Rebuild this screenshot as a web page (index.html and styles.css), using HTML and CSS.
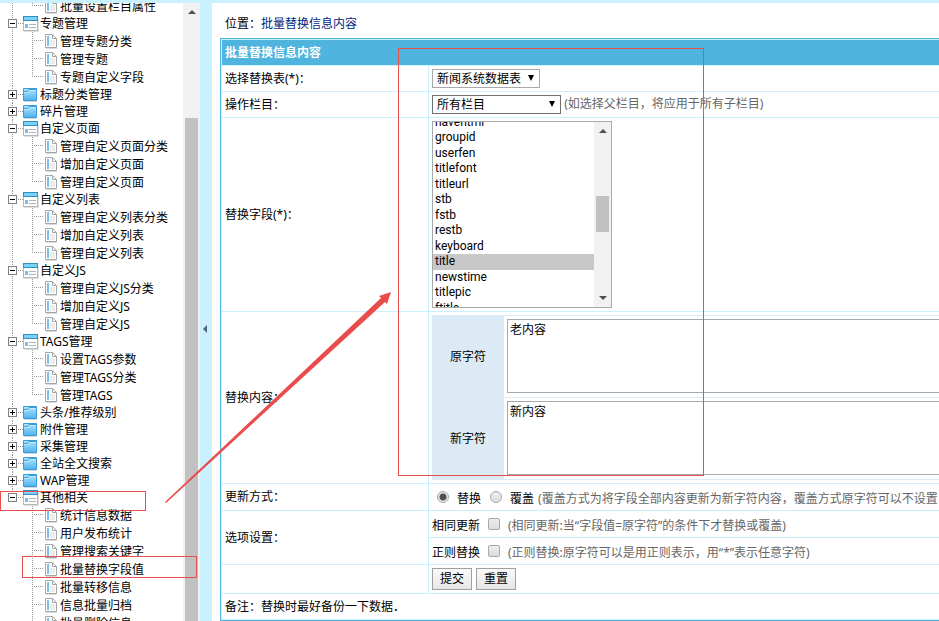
FILE: index.html
```html
<!DOCTYPE html>
<html lang="zh-CN">
<head>
  <meta charset="UTF-8" />
  <title>批量替换信息内容</title>
  <meta name="viewport" content="width=device-width, initial-scale=1.0" />
  <link rel="stylesheet" href="styles.css">
</head>
<body>
  <svg class="sprite" aria-hidden="true">
    <linearGradient id="blue" x1="0" y1="0" x2="0" y2="1">
      <stop offset="0" stop-color="#b4e6fd"/>
      <stop offset="1" stop-color="#4db2ef"/>
    </linearGradient>
    <symbol id="i-open" viewBox="0 0 16 16">
      <path d="M1 15.5h14.5V3" fill="none" stroke="#e0e0e0"/>
      <rect x="0.5" y="0.5" width="14" height="14" fill="#fdfdfd" stroke="#b4b8bb"/>
      <rect x="0" y="0" width="15" height="5" fill="#2f8fc6"/>
      <rect x="1" y="1" width="13" height="3" fill="#7dd0f7"/>
      <rect x="2" y="8" width="3" height="4" fill="#7cc0ea"/>
      <path d="M6 8.5h7M6 11.5h7" stroke="#b5b5b5"/>
    </symbol>
    <symbol id="i-folder" viewBox="0 0 16 16">
      <path d="M1 14.5h13" stroke="#d8d8d8"/>
      <path d="M0.5 13.5V1.5H13.5V13.5Z" fill="url(#blue)" stroke="#3a9bdb"/>
      <path d="M1 4.5H4.5L6 2.5H13" fill="none" stroke="#3a9bdb"/>
      <path d="M1 5.5H5L6.5 3.5H13" fill="none" stroke="#c4ecfe"/>
    </symbol>
    <symbol id="i-page" viewBox="0 0 13 16">
      <path d="M1 14.5h11" fill="none" stroke="#dcdcdc"/>
      <path d="M0.5 0.5H7.5L11.5 4.5V13.5H0.5Z" fill="#fff" stroke="#a3a7aa"/>
      <path d="M7.5 0.5V4.5H11.5" fill="none" stroke="#a3a7aa"/>
      <rect x="2" y="2" width="2" height="10" fill="#7cc0ea"/>
      <path d="M5 6h5v6H5z" fill="#ececec"/>
    </symbol>
  </svg>

  <div class="layout">
    <nav class="sidebar">
      <ul class="tree">
        <li class="node">
          <ul class="children">
            <li><svg class="icon-page"><use href="#i-page"/></svg><a href="#">批量设置栏目属性</a></li>
          </ul>
        </li>
        <li class="node">
          <div class="node-row"><button class="toggle minus" aria-label="收起"></button><svg class="icon"><use href="#i-open"/></svg><a href="#">专题管理</a></div>
          <ul class="children">
            <li><svg class="icon-page"><use href="#i-page"/></svg><a href="#">管理专题分类</a></li>
            <li><svg class="icon-page"><use href="#i-page"/></svg><a href="#">管理专题</a></li>
            <li><svg class="icon-page"><use href="#i-page"/></svg><a href="#">专题自定义字段</a></li>
          </ul>
        </li>
        <li class="node">
          <div class="node-row"><button class="toggle plus" aria-label="展开"></button><svg class="icon"><use href="#i-folder"/></svg><a href="#">标题分类管理</a></div>
        </li>
        <li class="node">
          <div class="node-row"><button class="toggle plus" aria-label="展开"></button><svg class="icon"><use href="#i-folder"/></svg><a href="#">碎片管理</a></div>
        </li>
        <li class="node">
          <div class="node-row"><button class="toggle minus" aria-label="收起"></button><svg class="icon"><use href="#i-open"/></svg><a href="#">自定义页面</a></div>
          <ul class="children">
            <li><svg class="icon-page"><use href="#i-page"/></svg><a href="#">管理自定义页面分类</a></li>
            <li><svg class="icon-page"><use href="#i-page"/></svg><a href="#">增加自定义页面</a></li>
            <li><svg class="icon-page"><use href="#i-page"/></svg><a href="#">管理自定义页面</a></li>
          </ul>
        </li>
        <li class="node">
          <div class="node-row"><button class="toggle minus" aria-label="收起"></button><svg class="icon"><use href="#i-open"/></svg><a href="#">自定义列表</a></div>
          <ul class="children">
            <li><svg class="icon-page"><use href="#i-page"/></svg><a href="#">管理自定义列表分类</a></li>
            <li><svg class="icon-page"><use href="#i-page"/></svg><a href="#">增加自定义列表</a></li>
            <li><svg class="icon-page"><use href="#i-page"/></svg><a href="#">管理自定义列表</a></li>
          </ul>
        </li>
        <li class="node">
          <div class="node-row"><button class="toggle minus" aria-label="收起"></button><svg class="icon"><use href="#i-open"/></svg><a href="#">自定义JS</a></div>
          <ul class="children">
            <li><svg class="icon-page"><use href="#i-page"/></svg><a href="#">管理自定义JS分类</a></li>
            <li><svg class="icon-page"><use href="#i-page"/></svg><a href="#">增加自定义JS</a></li>
            <li><svg class="icon-page"><use href="#i-page"/></svg><a href="#">管理自定义JS</a></li>
          </ul>
        </li>
        <li class="node">
          <div class="node-row"><button class="toggle minus" aria-label="收起"></button><svg class="icon"><use href="#i-open"/></svg><a href="#">TAGS管理</a></div>
          <ul class="children">
            <li><svg class="icon-page"><use href="#i-page"/></svg><a href="#">设置TAGS参数</a></li>
            <li><svg class="icon-page"><use href="#i-page"/></svg><a href="#">管理TAGS分类</a></li>
            <li><svg class="icon-page"><use href="#i-page"/></svg><a href="#">管理TAGS</a></li>
          </ul>
        </li>
        <li class="node">
          <div class="node-row"><button class="toggle plus" aria-label="展开"></button><svg class="icon"><use href="#i-folder"/></svg><a href="#">头条/推荐级别</a></div>
        </li>
        <li class="node">
          <div class="node-row"><button class="toggle plus" aria-label="展开"></button><svg class="icon"><use href="#i-folder"/></svg><a href="#">附件管理</a></div>
        </li>
        <li class="node">
          <div class="node-row"><button class="toggle plus" aria-label="展开"></button><svg class="icon"><use href="#i-folder"/></svg><a href="#">采集管理</a></div>
        </li>
        <li class="node">
          <div class="node-row"><button class="toggle plus" aria-label="展开"></button><svg class="icon"><use href="#i-folder"/></svg><a href="#">全站全文搜索</a></div>
        </li>
        <li class="node">
          <div class="node-row"><button class="toggle plus" aria-label="展开"></button><svg class="icon"><use href="#i-folder"/></svg><a href="#">WAP管理</a></div>
        </li>
        <li class="node last">
          <div class="node-row"><button class="toggle minus" aria-label="收起"></button><svg class="icon"><use href="#i-open"/></svg><a href="#">其他相关</a></div>
          <ul class="children">
            <li><svg class="icon-page"><use href="#i-page"/></svg><a href="#">统计信息数据</a></li>
            <li><svg class="icon-page"><use href="#i-page"/></svg><a href="#">用户发布统计</a></li>
            <li><svg class="icon-page"><use href="#i-page"/></svg><a href="#">管理搜索关键字</a></li>
            <li><svg class="icon-page"><use href="#i-page"/></svg><a href="#">批量替换字段值</a></li>
            <li><svg class="icon-page"><use href="#i-page"/></svg><a href="#">批量转移信息</a></li>
            <li><svg class="icon-page"><use href="#i-page"/></svg><a href="#">信息批量归档</a></li>
            <li><svg class="icon-page"><use href="#i-page"/></svg><a href="#">批量删除信息</a></li>
          </ul>
        </li>
      </ul>
      <div class="scrollbar side-scroll"><span class="arrow-up"></span><span class="thumb"></span></div>
    </nav>

    <button class="splitter" aria-label="收起菜单"><span class="arrow-left"></span></button>

    <main class="content">
      <p class="location">位置：<a href="#">批量替换信息内容</a></p>
      <form onsubmit="return false">
        <table class="form-table">
          <colgroup><col class="name-col"><col></colgroup>
          <tr><th colspan="2">批量替换信息内容</th></tr>
          <tr class="row">
            <td><label for="tbname">选择替换表(*)：</label></td>
            <td>
              <span class="drop"><select id="tbname" class="table-select"><option>新闻系统数据表</option></select></span>
            </td>
          </tr>
          <tr class="row">
            <td><label for="classid">操作栏目：</label></td>
            <td>
              <span class="drop"><select id="classid" class="class-select"><option>所有栏目</option></select></span>
              <span class="hint">(如选择父栏目，将应用于所有子栏目)</span>
            </td>
          </tr>
          <tr>
            <td><label for="field">替换字段(*)：</label></td>
            <td>
              <div class="listbox">
                <select id="field" size="12">
                  <option>havehtml</option>
                  <option>groupid</option>
                  <option>userfen</option>
                  <option>titlefont</option>
                  <option>titleurl</option>
                  <option>stb</option>
                  <option>fstb</option>
                  <option>restb</option>
                  <option>keyboard</option>
                  <option class="current">title</option>
                  <option>newstime</option>
                  <option>titlepic</option>
                  <option>ftitle</option>
                  <option>smalltext</option>
                </select>
                <div class="scrollbar list-scroll"><span class="arrow-up"></span><span class="thumb"></span><span class="arrow-down"></span></div>
              </div>
            </td>
          </tr>
          <tr>
            <td>替换内容：</td>
            <td class="replace-cell">
              <table class="replace-table">
                <tr>
                  <td class="replace-name"><label for="oldword">原字符</label></td>
                  <td class="replace-text"><textarea id="oldword">老内容</textarea></td>
                </tr>
                <tr>
                  <td class="replace-name"><label for="newword">新字符</label></td>
                  <td class="replace-text"><textarea id="newword">新内容</textarea></td>
                </tr>
              </table>
            </td>
          </tr>
          <tr class="option-row">
            <td>更新方式：</td>
            <td>
              <div class="line">
                <label><input type="radio" name="dotype" checked>替换</label>
                <label><input type="radio" name="dotype">覆盖</label>
                <span class="hint">(覆盖方式为将字段全部内容更新为新字符内容，覆盖方式原字符可以不设置</span>
              </div>
            </td>
          </tr>
          <tr class="option-row">
            <td rowspan="2">选项设置：</td>
            <td>
              <div class="line">
                <label>相同更新<input type="checkbox"></label>
                <span class="hint">(相同更新:当“字段值=原字符”的条件下才替换或覆盖)</span>
              </div>
            </td>
          </tr>
          <tr class="option-row">
            <td>
              <div class="line">
                <label>正则替换<input type="checkbox"></label>
                <span class="hint">(正则替换:原字符可以是用正则表示，用“*”表示任意字符)</span>
              </div>
            </td>
          </tr>
          <tr>
            <td></td>
            <td>
              <div class="buttons">
                <button type="submit">提交</button>
                <button type="reset">重置</button>
              </div>
            </td>
          </tr>
          <tr class="row"><td colspan="2">备注：替换时最好备份一下数据．</td></tr>
        </table>
      </form>
    </main>
  </div>

  <!-- red guide marks over the page -->
  <svg class="marks" aria-hidden="true">
    <g fill="none" stroke="#e8504f">
      <rect x="0.5" y="491.5" width="145" height="19"/>
      <rect x="22.5" y="556.5" width="174" height="21"/>
      <rect x="398.5" y="48.5" width="305" height="427"/>
    </g>
    <path d="M165 502L381 298L379 296L391 292L387 304L385 302L166 503Z" fill="#ea4b4b"/>
  </svg>

<script>
// start the field list a little way down
const fieldList = document.getElementById("field");
fieldList.scrollTop = 7;
</script>
</body>
</html>
```
FILE: styles.css
```css
* {
  box-sizing: border-box;
}
body {
  margin: 0;
  font-family: "Noto Sans", "Noto Sans CJK SC", sans-serif;
  font-size: 12px;
  line-height: 16px;
  color: #000;
  background: #c9f1ff;
  overflow: hidden;
}
a {
  color: #000;
  text-decoration: none;
}
input, select, textarea, button {
  font: inherit;
  color: inherit;
  margin: 0;
}
.sprite {
  position: absolute;
  width: 0;
  height: 0;
}
.layout {
  display: grid;
  grid-template-columns: 200px 12px minmax(0, 1fr);
  height: 100vh;
  padding-top: 3px;
}

/* tree menu */
.sidebar {
  display: flex;
  background: #fff;
  overflow: hidden;
}
.tree {
  flex: 1;
  margin: -6px 0 0;
  padding: 0;
  list-style: none;
  white-space: nowrap;
}
.node {
  background: repeating-linear-gradient(#999 0 1px, transparent 1px 2px) 12px 0 / 1px 100% no-repeat;
}
.node.last {
  background-size: 1px 8px;
}
.node-row {
  display: flex;
  align-items: center;
  height: 17px;
  padding-left: 8px;
  background: repeating-linear-gradient(90deg, #999 0 1px, transparent 1px 2px) 18px 8px / 5px 1px no-repeat;
}
.toggle {
  width: 9px;
  height: 9px;
  margin-right: 6px;
  padding: 0;
  border: 1px solid #808080;
  background: linear-gradient(#000, #000) center / 5px 1px no-repeat #fff;
}
.toggle.plus {
  background: linear-gradient(#000, #000) center / 5px 1px no-repeat,
    linear-gradient(#000, #000) center / 1px 5px no-repeat #fff;
}
.icon {
  width: 16px;
  height: 16px;
  margin-right: 1px;
}
.children {
  margin: 0;
  padding: 0;
  list-style: none;
}
.children li {
  display: flex;
  align-items: flex-end;
  height: 18px;
  padding-left: 45px;
  background: repeating-linear-gradient(#999 0 1px, transparent 1px 2px) 32px 0 / 1px 100% no-repeat,
    repeating-linear-gradient(90deg, #999 0 1px, transparent 1px 2px) 34px 8px / 9px 1px no-repeat;
}
.children li:last-child {
  background-size: 1px 9px, 9px 1px;
}
.icon-page {
  width: 13px;
  height: 16px;
  margin-right: 2px;
}

/* drawn scrollbars */
.scrollbar {
  display: flex;
  flex-direction: column;
  align-items: center;
  width: 17px;
  background: #f1f1f1;
}
.arrow-up, .arrow-down {
  border: 4px solid transparent;
}
.arrow-up {
  border-top: 0;
  border-bottom-color: #505050;
}
.arrow-down {
  border-bottom: 0;
  border-top-color: #505050;
}
.thumb {
  width: 13px;
  background: #c1c1c1;
}
.side-scroll {
  padding-top: 7px;
}
.side-scroll .thumb {
  flex: 1;
  margin-top: 104px;
}
.list-scroll {
  padding: 7px 0;
}
.list-scroll .thumb {
  height: 36px;
  margin: 63px 0 auto;
}

.splitter {
  display: flex;
  align-items: center;
  padding: 0 0 0 3px;
  border: 0;
  background: #c9f1ff;
}
.arrow-left {
  margin-top: 34px;
  border: 4px solid transparent;
  border-left: 0;
  border-right-color: #4f6476;
}

/* content */
.content {
  padding: 13px 0 0 8px;
  background: #fff;
  overflow: hidden;
}
.location {
  margin: 0 0 6px 5px;
}
.location a {
  color: #001f7e;
}
/* the right edge runs just past the frame */
.form-table {
  width: calc(100% + 1px);
  border: 1px solid #4fb4de;
  border-right: 0;
  border-spacing: 1px;
  background: #c9f1ff;
  table-layout: fixed;
}
.name-col {
  width: 206px;
}
.form-table th {
  height: 25px;
  padding: 0 3px;
  background: #4fb4de;
  color: #fff;
  text-align: left;
}
.form-table td {
  padding: 3px;
  background: #fff;
  white-space: nowrap;
}
.form-table .row td {
  height: 25px;
  padding-top: 0;
  padding-bottom: 0;
}
.form-table .option-row td {
  height: 26px;
  padding-top: 0;
  padding-bottom: 0;
}
.hint {
  color: #666;
}
.drop {
  display: inline-block;
  position: relative;
  vertical-align: middle;
}
.drop select {
  display: block;
  height: 19px;
  padding: 0 4px;
  appearance: none;
  border: 1px solid #a9a9a9;
  border-radius: 0;
  background: #fff;
  line-height: 17px;
}
.drop::after {
  content: "";
  position: absolute;
  top: 6px;
  right: 6px;
  border: 3px solid transparent;
  border-top: 6px solid #000;
  border-bottom: 0;
  pointer-events: none;
}
.drop .table-select {
  width: 108px;
}
.drop .class-select {
  width: 129px;
  border-color: #707070;
}
.listbox {
  display: flex;
  width: 180px;
  height: 187px;
  border: 1px solid #a9a9a9;
}
.listbox select {
  flex: 1;
  height: 185px;
  padding: 0;
  border: 0;
  border-radius: 0;
  outline: 0;
  background: #fff;
  font-family: Roboto, sans-serif;
  scrollbar-width: none;
}
.listbox option {
  height: 15px;
  min-height: 0;
  padding: 0 2px;
}
.listbox option:nth-child(even) {
  height: 16px;
}
.listbox .current {
  background: #c8c8c8;
}
.form-table .replace-cell {
  padding-right: 0;
}
.replace-table {
  width: 100%;
  border-spacing: 0;
  border-top: 1px solid #dbeaf5;
  table-layout: fixed;
}
.replace-table td {
  height: 82px;
  border-bottom: 1px solid #dbeaf5;
}
.replace-table .replace-name {
  width: 72px;
  background: #dbeaf5;
  text-align: center;
}
.replace-table .replace-text {
  padding: 3px 0 3px 3px;
  vertical-align: top;
}
.replace-text textarea {
  display: block;
  width: 100%;
  height: 74px;
  padding: 2px;
  border: 1px solid #a9a9a9;
  border-right: 0;
  resize: none;
}
.line, .line label {
  display: flex;
  align-items: center;
}
.line {
  padding-top: 3px;
}
.line label {
  margin-right: 4px;
}
.line input {
  appearance: none;
  width: 12px;
  height: 12px;
  border: 1px solid #a8a8a8;
  background: linear-gradient(#ededed, #dcdcdc);
}
.line input[type="radio"] {
  margin: 0 8px 4px 5px;
  border-radius: 50%;
}
.line input[type="radio"]:checked {
  background: radial-gradient(#505050 0 3px, #e6e6e6 4px);
}
.line input[type="checkbox"] {
  margin: 0 4px 4px 8px;
  border-radius: 2px;
}
.buttons {
  display: flex;
  gap: 4px;
}
.buttons button {
  width: 40px;
  height: 22px;
  padding: 0;
  border: 1px solid #a0a0a0;
  background: linear-gradient(#fafafa, #e6e6e6);
}
.marks {
  position: absolute;
  top: 0;
  left: 0;
  width: 100%;
  height: 100%;
  pointer-events: none;
}
```
